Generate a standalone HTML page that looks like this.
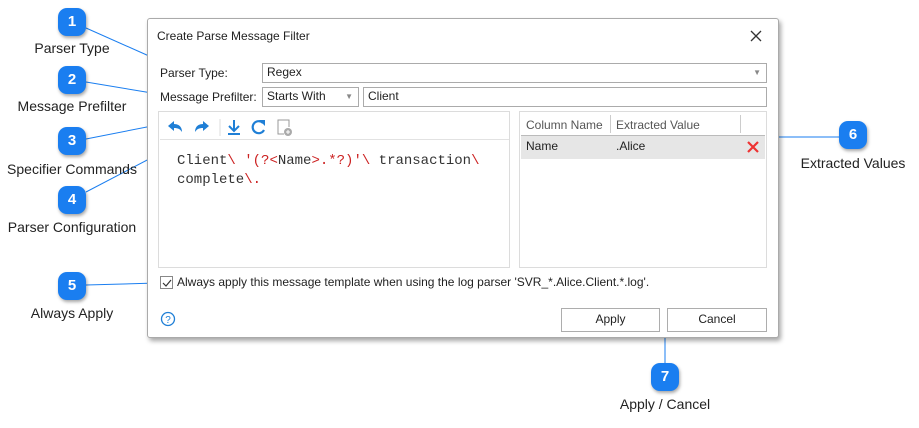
<!DOCTYPE html>
<html><head><meta charset="utf-8"><style>
*{margin:0;padding:0;box-sizing:border-box}
body{width:919px;height:428px;background:#fff;position:relative;overflow:hidden;font-family:"Liberation Sans",sans-serif;font-size:12px;color:#222}
.a{position:absolute}
.badge{position:absolute;width:28px;height:28px;border-radius:9px;background:#1a7ef0;color:#fff;font-weight:bold;font-size:15px;text-align:center;line-height:28px;box-shadow:1px 2px 3px rgba(0,0,0,.35)}
.lbl{position:absolute;font-size:14px;color:#222;white-space:nowrap;transform:translateX(-50%)}
.dlg{position:absolute;left:147px;top:18px;width:632px;height:320px;background:#fff;border:1px solid #aaa;box-shadow:2px 3px 5px rgba(0,0,0,.35);border-radius:3px}
.box{position:absolute;border:1px solid #ababab;background:#fff;padding-left:4px;line-height:17px;font-size:12px}
.panel{position:absolute;border:1px solid #dcdcdc}
.btn{position:absolute;border:1px solid #adadad;background:#fff;text-align:center;line-height:21px;font-size:12px}
</style></head><body>
<svg class="a" style="left:0;top:0" width="919" height="428">
<g stroke="#1a7ef0" stroke-width="1" fill="none">
<line x1="86" y1="28" x2="158" y2="60"/>
<line x1="86" y1="82" x2="158" y2="94"/>
<line x1="86" y1="139" x2="157" y2="125"/>
<line x1="86" y1="192" x2="172" y2="147"/>
<line x1="86" y1="285" x2="157" y2="283"/>
<line x1="839" y1="137" x2="762" y2="137"/>
<line x1="665" y1="363" x2="665" y2="333"/>
</g></svg>
<div class="dlg">
<div class="a" style="left:9px;top:10px;font-size:12px">Create Parse Message Filter</div>
<svg class="a" style="left:602px;top:11px" width="12" height="12"><path d="M1 1L11 11M11 1L1 11" stroke="#333" stroke-width="1.3"/></svg>
<div class="a" style="left:12px;top:47px">Parser Type:</div>
<div class="box" style="left:114px;top:44px;width:505px;height:20px">Regex<span class="a" style="right:5px;top:0;color:#888;font-size:8px">▼</span></div>
<div class="a" style="left:12px;top:71px">Message Prefilter:</div>
<div class="box" style="left:114px;top:68px;width:97px;height:20px">Starts With<span class="a" style="right:5px;top:0;color:#888;font-size:8px">▼</span></div>
<div class="box" style="left:215px;top:68px;width:404px;height:20px">Client</div>
<div class="panel" style="left:10px;top:92px;width:352px;height:157px">
 <svg class="a" style="left:6px;top:5px" width="130" height="20">
  <path d="M3 9L9 4V7C14 7 17 10 17 15C15 12 13 11 9 11V14Z" fill="#1f7fd6"/>
  <path d="M44 9L38 4V7C33 7 30 10 30 15C32 12 34 11 38 11V14Z" fill="#1f7fd6"/>
  <line x1="55" y1="2" x2="55" y2="19" stroke="#ddd"/>
  <path d="M69 3V13M64 9L69 14L74 9M63 17H75" stroke="#1f7fd6" stroke-width="2" fill="none"/>
  <path d="M98 6A6 6 0 1 0 99 13" stroke="#1f7fd6" stroke-width="2.2" fill="none"/><path d="M94 3L100 3L100 9Z" fill="#1f7fd6"/>
  <path d="M124 10V3H113V17H119" stroke="#999" fill="none"/><circle cx="123" cy="15" r="4" fill="#aaa"/><path d="M121 15H125M123 13V17" stroke="#fff"/>
 </svg>
 <div class="a" style="left:1px;top:27px;width:349px;height:1px;background:#e2e2e2"></div>
 <div class="a" style="left:18px;top:40px;font-family:'Liberation Mono',monospace;font-size:14px;line-height:19px;color:#333">Client<span style="color:#c22">\</span> <span style="color:#c22">'(?&lt;</span>Name<span style="color:#c22">&gt;.*?)'\</span> transaction<span style="color:#c22">\</span><br>complete<span style="color:#c22">\.</span></div>
</div>
<div class="panel" style="left:371px;top:92px;width:248px;height:157px">
 <div class="a" style="left:6px;top:6px;color:#555">Column Name</div>
 <div class="a" style="left:90px;top:3px;width:1px;height:18px;background:#ccc"></div>
 <div class="a" style="left:96px;top:6px;color:#555">Extracted Value</div>
 <div class="a" style="left:220px;top:3px;width:1px;height:18px;background:#ccc"></div>
 <div class="a" style="left:1px;top:23px;width:244px;height:24px;background:#e6e6e6;border-top:1px solid #bbb"></div>
 <div class="a" style="left:6px;top:27px">Name</div>
 <div class="a" style="left:96px;top:27px">.Alice</div>
 <svg class="a" style="left:227px;top:29px" width="12" height="12"><path d="M1 1L11 11M11 1L1 11" stroke="#e33" stroke-width="2.2"/></svg>
</div>
<div class="a" style="left:12px;top:257px;width:13px;height:13px;border:1px solid #888"></div>
<svg class="a" style="left:14px;top:259px" width="10" height="10"><path d="M1 5L4 8L9 2" stroke="#333" fill="none" stroke-width="1.2"/></svg>
<div class="a" style="left:29px;top:256px">Always apply this message template when using the log parser 'SVR_*.Alice.Client.*.log'.</div>
<svg class="a" style="left:12px;top:292px" width="16" height="16"><circle cx="8" cy="8" r="6.5" stroke="#1f7fd6" fill="none" stroke-width="1.3"/><text x="8" y="12" font-size="10" text-anchor="middle" fill="#1f7fd6" font-family="Liberation Sans">?</text></svg>
<div class="btn" style="left:413px;top:289px;width:99px;height:24px">Apply</div>
<div class="btn" style="left:519px;top:289px;width:100px;height:24px">Cancel</div>
</div>
<div class="badge" style="left:58px;top:8px">1</div><div class="lbl" style="left:72px;top:40px">Parser Type</div>
<div class="badge" style="left:58px;top:66px">2</div><div class="lbl" style="left:72px;top:98px">Message Prefilter</div>
<div class="badge" style="left:58px;top:127px">3</div><div class="lbl" style="left:72px;top:161px">Specifier Commands</div>
<div class="badge" style="left:58px;top:186px">4</div><div class="lbl" style="left:72px;top:219px">Parser Configuration</div>
<div class="badge" style="left:58px;top:272px">5</div><div class="lbl" style="left:72px;top:305px">Always Apply</div>
<div class="badge" style="left:839px;top:121px">6</div><div class="lbl" style="left:853px;top:155px">Extracted Values</div>
<div class="badge" style="left:651px;top:363px">7</div><div class="lbl" style="left:665px;top:396px">Apply / Cancel</div>
</body></html>
